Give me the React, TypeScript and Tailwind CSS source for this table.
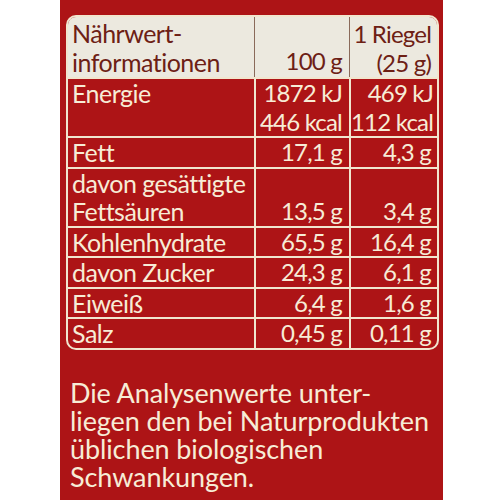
const rows: { label: string[]; a: string[]; b: string[] }[] = [
  { label: ["Energie"], a: ["1872 kJ", "446 kcal"], b: ["469 kJ", "112 kcal"] },
  { label: ["Fett"], a: ["17,1 g"], b: ["4,3 g"] },
  { label: ["davon gesättigte", "Fettsäuren"], a: ["13,5 g"], b: ["3,4 g"] },
  { label: ["Kohlenhydrate"], a: ["65,5 g"], b: ["16,4 g"] },
  { label: ["davon Zucker"], a: ["24,3 g"], b: ["6,1 g"] },
  { label: ["Eiweiß"], a: ["6,4 g"], b: ["1,6 g"] },
  { label: ["Salz"], a: ["0,45 g"], b: ["0,11 g"] },
];

export default function App() {
  return (
    <div
      className="w-[500px] h-[500px] bg-white pl-[60px] overflow-hidden"
      style={{ fontFamily: "Lato, 'Open Sans', sans-serif" }}
    >
      <div className="w-[383px] h-[500px] bg-[#ad1416] pt-[15px] pl-[6px] text-[25px] leading-[28.5px] tracking-[-0.5px] text-[#f7ecd6]">
        <div className="w-[373px] rounded-[10px] border-2 border-[#f1e6cf] overflow-hidden">
          {/* header */}
          <div className="grid grid-cols-[186px_95px_1fr] bg-[#ece9df] text-[#6d2015] h-[60px]">
            <div className="px-[4px] pt-[2px] leading-[29px]">
              <div>Nährwert-</div>
              <div>informationen</div>
            </div>
            <div className="border-l border-[#8a6a5a] flex items-end justify-end pr-[7px] pb-[2px] whitespace-nowrap text-[24px] tracking-[-0.8px]">
              100 g
            </div>
            <div className="border-l border-[#8a6a5a] flex flex-col items-end pr-[6px] pt-[2px] leading-[29px] whitespace-nowrap text-[24px] tracking-[-0.8px]">
              <div>1 Riegel</div>
              <div>(25 g)</div>
            </div>
          </div>
          {rows.map((r, i) => (
            <div
              key={i}
              className="grid grid-cols-[186px_95px_1fr] border-t-2 border-[#f1e6cf]"
            >
              <div className="px-[4px] whitespace-nowrap">
                {r.label.map((l) => (
                  <div key={l}>{l}</div>
                ))}
              </div>
              <div className="border-l-2 border-[#f1e6cf] flex flex-col justify-end items-end pr-[7px] whitespace-nowrap text-[24px] tracking-[-0.8px]">
                {r.a.map((v) => (
                  <div key={v}>{v}</div>
                ))}
              </div>
              <div className="border-l-2 border-[#f1e6cf] flex flex-col justify-end items-end pr-[6px] whitespace-nowrap text-[24px] tracking-[-0.8px]">
                {r.b.map((v) => (
                  <div key={v}>{v}</div>
                ))}
              </div>
            </div>
          ))}
        </div>
        <p className="mt-[29px] pl-[4px] text-[27px] leading-[28px] tracking-[-0.1px] whitespace-nowrap">
          Die Analysenwerte unter-
          <br />
          liegen den bei Naturprodukten
          <br />
          üblichen biologischen
          <br />
          Schwankungen.
        </p>
      </div>
    </div>
  );
}
